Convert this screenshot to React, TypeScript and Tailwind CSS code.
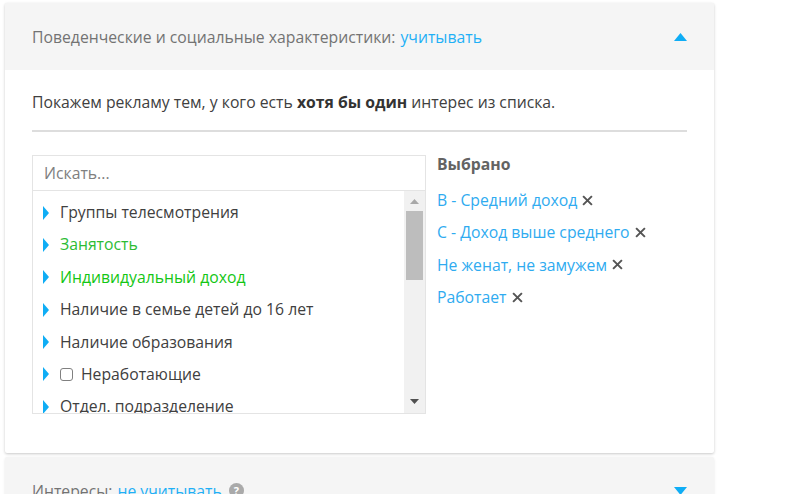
const rows = [
  { t: "Группы телесмотрения", c: "text-[#404040]" },
  { t: "Занятость", c: "text-[#2cbc34]" },
  { t: "Индивидуальный доход", c: "text-[#14c614]" },
  { t: "Наличие в семье детей до 16 лет", c: "text-[#404040]" },
  { t: "Наличие образования", c: "text-[#404040]" },
  { t: "Неработающие", c: "text-[#404040]", check: true },
  { t: "Отдел. подразделение", c: "text-[#404040]" },
];

const selected = ["В - Средний доход", "С - Доход выше среднего", "Не женат, не замужем", "Работает"];

function Tri({ dir, className }: { dir: "up" | "down" | "right"; className: string }) {
  const pts = dir === "up" ? "0,10 7,0 14,10" : dir === "down" ? "0,0 14,0 7,10" : "0,0 10,7 0,14";
  const vb = dir === "right" ? "0 0 10 14" : "0 0 14 10";
  return (
    <svg viewBox={vb} className={className} preserveAspectRatio="none">
      <polygon points={pts} fill="currentColor" />
    </svg>
  );
}

function X() {
  return (
    <svg viewBox="0 0 10 10" className="ml-[5px] h-[11px] w-[11px] shrink-0 text-[#555555]">
      <path d="M1 1 L9 9 M9 1 L1 9" stroke="currentColor" strokeWidth="1.8" />
    </svg>
  );
}

export default function App() {
  return (
    <div className="h-[494px] w-[800px] overflow-hidden bg-white pl-[5px] pt-[3px] font-['Open_Sans',sans-serif] text-[15.75px] leading-[20px] text-[#404040]">
      <div className="w-[709px] rounded-[2px] bg-white shadow-[0_1px_3px_rgba(0,0,0,0.22)]">
        <div className="flex h-[67px] items-center justify-between bg-[#f5f5f5] pl-[27px] pr-[27px]">
          <div>
            <span className="text-[#737373]">Поведенческие и социальные характеристики:</span>
            <span className="ml-[5px] text-[#1fb0f6]">учитывать</span>
          </div>
          <Tri dir="up" className="h-[8px] w-[13px] text-[#0fadf5]" />
        </div>
        <div className="h-[383px] px-[27px]">
          <div className="flex h-[62px] items-start border-b-2 border-[#dddddd] pt-[22px]">
            <p>
              Покажем рекламу тем, у кого есть <b className="font-bold text-[#333333]">хотя бы один</b> интерес из списка.
            </p>
          </div>
          <div className="mt-[23px] flex">
            <div className="w-[394px] shrink-0 border border-[#e4e4e4]">
              <div className="flex h-[35px] items-center border-b border-[#e4e4e4] pl-[11px] text-[#808080]">Искать...</div>
              <div className="flex h-[222px]">
                <div className="min-w-0 flex-1 overflow-hidden pl-[10px] pt-[11px]">
                  {rows.map((r) => (
                    <div key={r.t} className="flex h-[32.4px] items-start">
                      <Tri dir="right" className="mt-[3.5px] h-[14px] w-[6px] shrink-0 text-[#0fadf5]" />
                      {r.check && (
                        <span className="ml-[11px] mt-[4px] h-[13px] w-[13px] shrink-0 rounded-[3px] border border-[#808080] bg-white" />
                      )}
                      <span className={`${r.check ? "ml-[8px]" : "ml-[11px]"} whitespace-nowrap ${r.c}`}>{r.t}</span>
                    </div>
                  ))}
                </div>
                <div className="flex w-[21px] shrink-0 flex-col items-center bg-[#f1f1f1] pl-[2px] pr-[2px]">
                  <Tri dir="up" className="mt-[8px] h-[5px] w-[9px] text-[#a8a8a8]" />
                  <div className="mt-[7px] h-[69px] w-full bg-[#bdbdbd]" />
                  <div className="flex-1" />
                  <Tri dir="down" className="mb-[9px] h-[5px] w-[9px] text-[#505050]" />
                </div>
              </div>
            </div>
            <div className="ml-[11px] min-w-0 flex-1">
              <div className="mt-[-1px] font-bold text-[#636363]">Выбрано</div>
              <div className="mt-[16px] flex flex-col gap-[12.4px]">
                {selected.map((s) => (
                  <div key={s} className="flex items-center text-[#2fabf0]">
                    <span>{s}</span>
                    <X />
                  </div>
                ))}
              </div>
            </div>
          </div>
        </div>
      </div>
      <div className="mt-[4px] w-[709px] rounded-[2px] bg-[#f5f5f5] shadow-[0_1px_3px_rgba(0,0,0,0.1)]">
        <div className="flex h-[67px] items-center justify-between pl-[27px] pr-[27px]">
          <div className="flex items-center">
            <span className="text-[#737373]">Интересы:</span>
            <span className="ml-[5px] text-[#1fb0f6]">не учитывать</span>
            <span className="ml-[7px] flex h-[15px] w-[15px] items-center justify-center rounded-full bg-[#aaaaaa] text-[11px] font-bold leading-none text-white">?</span>
          </div>
          <Tri dir="down" className="h-[8px] w-[13px] text-[#0fadf5]" />
        </div>
      </div>
    </div>
  );
}
